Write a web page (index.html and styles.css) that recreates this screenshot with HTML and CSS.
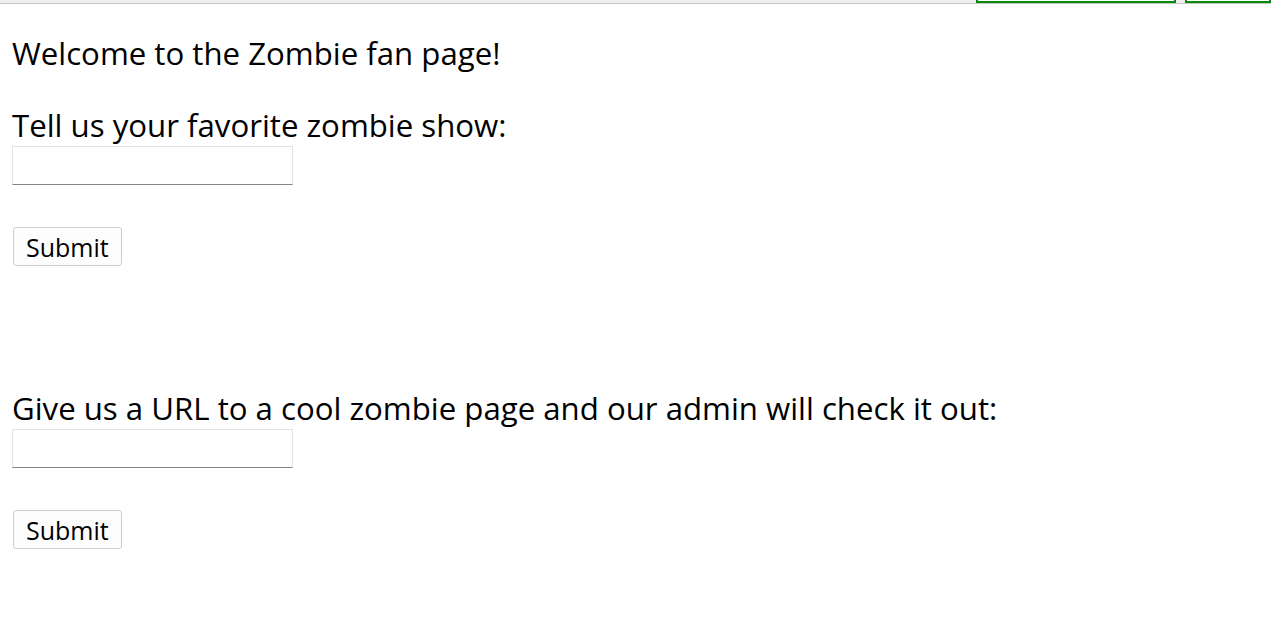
FILE: index.html
```html
<!DOCTYPE html>
<html lang="en">
<head>
  <meta charset="UTF-8" />
  <meta name="viewport" content="width=device-width,initial-scale=1.0">
  <title>Zombie fan page</title>
  <link rel="stylesheet" href="styles.css">
</head>
<body>
  <div class="topbar">
    <div class="topbar-fill"></div>
    <div class="tab tab-wide"></div>
    <div class="tab-gap"></div>
    <div class="tab tab-narrow"></div>
  </div>

  <div class="content">
    <p class="line welcome">Welcome to the Zombie fan page!</p>

    <form class="entry">
      <label class="line">Tell us your favorite zombie show:</label>
      <input type="text" class="field">
      <button type="submit" class="submit">Submit</button>
    </form>

    <form class="entry entry-url">
      <label class="line">Give us a URL to a cool zombie page and our admin will check it out:</label>
      <input type="text" class="field">
      <button type="submit" class="submit">Submit</button>
    </form>
  </div>
</body>
</html>
```

FILE: styles.css
```css
html, body {
  margin: 0;
  padding: 0;
  background-color: #fff;
  overflow: hidden;
}

body {
  font-family: "Open Sans", "Noto Sans", sans-serif;
  color: #000;
}

.topbar {
  display: flex;
  height: 3px;
  border-bottom: 1px solid #c4c4c4;
}

.topbar-fill {
  flex: 1;
  background-color: #efefef;
}

.tab {
  background-color: #fff;
  border: 2px solid #0a8a0a;
  border-top: none;
  box-sizing: border-box;
}

.tab-wide { width: 200px; }
.tab-gap { width: 9px; background-color: #efefef; }
.tab-narrow { width: 86px; }

.content {
  padding-left: 12px;
}

.line {
  display: block;
  margin: 0;
  font-size: 31.2px;
  line-height: 36px;
}

.welcome {
  margin-top: 31px;
}

.entry {
  display: flex;
  flex-direction: column;
  align-items: flex-start;
  margin: 36px 0 0;
}

.entry-url {
  margin-top: 124px;
}

.field {
  width: 281px;
  height: 39px;
  box-sizing: border-box;
  margin: 3px 0 0;
  border: 1px solid #e3e3e3;
  border-bottom-color: #858585;
  border-radius: 0;
  background-color: #fff;
}

.submit {
  margin: 42px 0 0 1px;
  height: 39px;
  padding: 0 12px;
  font-family: inherit;
  font-size: 25px;
  color: #000;
  background-color: #fdfdfd;
  border: 1px solid #cfcfcf;
  border-radius: 3px;
}
```
